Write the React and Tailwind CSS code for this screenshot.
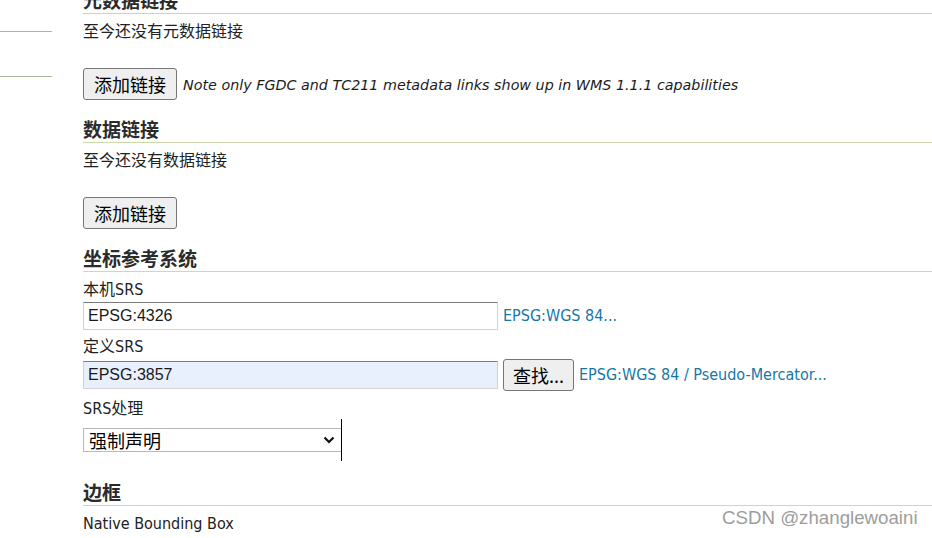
import React from 'react';

const body = { fontFamily: '"DejaVu Sans Condensed", "DejaVu Sans", "Noto Sans CJK SC", sans-serif' };
const cjk = { fontFamily: '"Noto Sans CJK SC", "Microsoft YaHei", sans-serif' };
const arial = { fontFamily: '"Liberation Sans", Arial, sans-serif' };

function SectionHeading({ children, line = 'border-[#cbd9a9]', className = '' }) {
  return (
    <h3
      className={`h-[27px] leading-[26px] text-[19px] font-bold text-[#2b2b2b] border-b ${line} ${className}`}
      style={cjk}
    >
      {children}
    </h3>
  );
}

function PlainButton({ children, className = 'px-[10px]' }) {
  return (
    <button
      className={`h-[32px] bg-[#efefef] border border-[#767676] rounded-[3px] text-[18px] text-black leading-none ${className}`}
      style={cjk}
    >
      {children}
    </button>
  );
}

function TextBox({ value, filled }) {
  return (
    <input
      readOnly
      value={value}
      className={`w-[415px] h-[28px] px-[4px] text-[16px] text-[#1a1a1a] border border-[#d2d2d2] border-t-[#7b7b7b] outline-none ${
        filled ? 'bg-[#e8f0fe]' : 'bg-white'
      }`}
      style={arial}
    />
  );
}

export default function App() {
  return (
    <div className="relative h-[538px] w-[932px] overflow-hidden bg-white text-[#222]" style={body}>
      <div className="flex">
        {/* sidebar separators */}
        <div className="w-[52px] shrink-0">
          <div className="mt-[31px] border-t border-[#a9b797]" />
          <div className="mt-[44px] border-t border-[#a9b797]" />
        </div>

        <div className="ml-[31px] flex-1 -mt-[13px]">
          <SectionHeading>元数据链接</SectionHeading>
          <p className="mt-[6px] h-[20px] leading-[20px] text-[16px]" style={cjk}>至今还没有元数据链接</p>
          <div className="mt-[28px] flex items-center gap-[6px]">
            <PlainButton>添加链接</PlainButton>
            <em className="mt-[3px] text-[14.3px] text-[#1c1c1c]" style={{ fontFamily: '"DejaVu Sans", sans-serif' }}>
              Note only FGDC and TC211 metadata links show up in WMS 1.1.1 capabilities
            </em>
          </div>

          <SectionHeading className="mt-[16px]">数据链接</SectionHeading>
          <p className="mt-[6px] h-[20px] leading-[20px] text-[16px]" style={cjk}>至今还没有数据链接</p>
          <div className="mt-[28px] flex">
            <PlainButton>添加链接</PlainButton>
          </div>

          <SectionHeading className="mt-[16px]" line="border-[#c6e09e]">坐标参考系统</SectionHeading>
          <p className="mt-[8px] h-[20px] leading-[20px] text-[16px]">本机SRS</p>
          <div className="mt-[2px] flex items-center gap-[5px]">
            <TextBox value="EPSG:4326" />
            <a className="text-[16px] text-[#1677a6]">EPSG:WGS 84...</a>
          </div>
          <p className="mt-[7px] h-[20px] leading-[20px] text-[16px]">定义SRS</p>
          <div className="mt-[2px] flex items-center gap-[5px]">
            <TextBox value="EPSG:3857" filled />
            <PlainButton className="px-[9px]">查找...</PlainButton>
            <a className="text-[16px] text-[#1677a6]">EPSG:WGS 84 / Pseudo-Mercator...</a>
          </div>
          <p className="mt-[8px] h-[20px] leading-[20px] text-[16px]">SRS处理</p>
          <div className="flex h-[42px] w-[259px] items-center border-r border-black">
            <div className="flex h-[24px] w-[258px] items-center justify-between border border-r-0 border-[#b9b9b9] pl-[5px] pr-[6px]">
              <span className="text-[18px] leading-none text-black" style={cjk}>强制声明</span>
              <svg width="12" height="8" viewBox="0 0 12 8" fill="none">
                <polyline points="1.5,1.5 6,6 10.5,1.5" stroke="#111" strokeWidth="2.2" />
              </svg>
            </div>
          </div>

          <SectionHeading className="mt-[18px]" line="border-[#c6e09e]">边框</SectionHeading>
          <p className="mt-[8px] h-[20px] leading-[20px] text-[16px]">Native Bounding Box</p>
        </div>
      </div>

      <div className="absolute left-[722px] top-[506px] text-[18.7px] leading-[24px] text-[#9d9d9d]" style={arial}>
        CSDN @zhanglewoaini
      </div>
    </div>
  );
}
